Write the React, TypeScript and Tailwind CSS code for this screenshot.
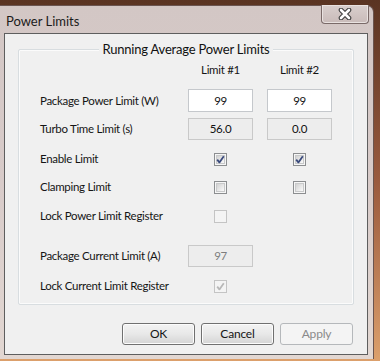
import React from "react";

const FONT = { fontFamily: '"Lato", "Noto Sans", sans-serif' };

function CheckMark({ color }: { color: string }) {
  return (
    <svg width="9" height="9" viewBox="0 0 9 9" className="absolute left-[1px] top-[1px]">
      <path d="M1.2 4.6 L3.4 7.4 L7.8 1.2" fill="none" stroke={color} strokeWidth="1.8" strokeLinejoin="round" />
    </svg>
  );
}

function CheckBox({ checked = false, disabled = false }: { checked?: boolean; disabled?: boolean }) {
  return (
    <div
      className={
        disabled
          ? "relative w-[13px] h-[13px] border border-[#c4c4c4] bg-[#f4f4f4] p-[1px]"
          : "relative w-[13px] h-[13px] border border-[#8c8e90] bg-[#f6f6f6] p-[1px]"
      }
    >
      <div
        className={
          disabled
            ? "w-full h-full bg-[#f4f4f4]"
            : "w-full h-full border border-[#c8c9ca] bg-gradient-to-br from-[#d2d2d2] to-[#fafafa]"
        }
      />
      {checked && <CheckMark color={disabled ? "#b8b8b8" : "#3a4a7c"} />}
    </div>
  );
}

function Field({ value, readOnly = false, disabled = false }: { value: string; readOnly?: boolean; disabled?: boolean }) {
  return (
    <div
      className={
        "w-[65px] h-full flex items-center justify-center border " +
        (readOnly || disabled ? "bg-[#ededed] border-[#c9c9c9] " : "bg-white border-[#c5c8cc] ") +
        (disabled ? "text-[#7d7d7d]" : "text-[#111]")
      }
    >
      {value}
    </div>
  );
}

function Row({ label, className, children }: { label: string; className: string; children?: React.ReactNode }) {
  return (
    <div className={"flex items-center " + className}>
      <div className="w-[148px] text-[#151515]">{label}</div>
      {children}
    </div>
  );
}

function Cell({ children }: { children?: React.ReactNode }) {
  return <div className="w-[65px] h-full flex items-center justify-center">{children}</div>;
}

function WinButton({ label, disabled = false }: { label: string; disabled?: boolean }) {
  return (
    <div
      className={
        disabled
          ? "w-[73px] h-[22px] rounded-[3px] border border-[#b5b8bb] bg-[#f4f4f4] flex items-center justify-center text-[#8a8a8a]"
          : "w-[73px] h-[22px] rounded-[3px] border border-[#707070] bg-gradient-to-b from-[#f3f3f3] via-[#e8e8e8] to-[#d4d4d4] flex items-center justify-center text-[#151515] shadow-[inset_0_0_0_1px_#fcfcfc]"
      }
    >
      {label}
    </div>
  );
}

export default function App() {
  return (
    <div className="w-[380px] h-[361px] overflow-hidden bg-gradient-to-b from-[#5a3422] via-[#9a5a3e] to-[#dca06c]" style={FONT}>
      <div className="mt-[5px] w-[374px] h-[354px] rounded-tr-[7px] border-r border-t border-[#6b5550] bg-gradient-to-b from-[#d3c7c5] via-[#d8cbc9] to-[#e2d7d2] flex flex-col pl-[4px] pr-[5px] pb-[4px]">
        {/* title bar */}
        <div className="h-[27px] flex justify-between items-start -mr-[1px]">
          <div className="pt-[7px] pl-[2px] text-[13px] leading-[16px] text-[#1b1b1b]">Power Limits</div>
          <div className="w-[48px] h-[19px] -mt-[1px] rounded-b-[4px] border border-t-0 border-[#7a6a68] bg-gradient-to-b from-[#d9cfcd] to-[#c9bbb9] shadow-[inset_0_0_0_1px_#e9e2e0] flex items-center justify-center">
            <svg width="14" height="12" viewBox="0 0 14 12">
              <path d="M3 2 L11 10 M11 2 L3 10" stroke="#3a3a3a" strokeWidth="4.6" strokeLinecap="round" />
              <path d="M3 2 L11 10 M11 2 L3 10" stroke="#ffffff" strokeWidth="2.6" strokeLinecap="round" />
            </svg>
          </div>
        </div>

        {/* client area */}
        <div className="flex-1 border border-[#5e5e5e] bg-[#f0f0f0] px-[13px] flex flex-col text-[11.5px] tracking-[-0.3px]">
          <div className="relative mt-[15px] border border-[#d8dde0] rounded-[2px] shadow-[inset_0_0_0_1px_#fbfbfb] pl-[21px] pb-[5px] flex flex-col">
            <div className="absolute -top-[10px] left-0 right-0 flex justify-center">
              <span className="bg-[#f0f0f0] px-[3px] text-[13px] tracking-[-0.2px] leading-[18px] text-[#111]">Running Average Power Limits</span>
            </div>

            <Row label="" className="mt-[10px] h-[20px]">
              <Cell><span className="text-[#151515]">Limit #1</span></Cell>
              <div className="w-[14px]" />
              <Cell><span className="text-[#151515]">Limit #2</span></Cell>
            </Row>
            <Row label="Package Power Limit (W)" className="mt-[9px] h-[23px]">
              <Field value="99" />
              <div className="w-[14px]" />
              <Field value="99" />
            </Row>
            <Row label="Turbo Time Limit (s)" className="mt-[6px] h-[22px]">
              <Field value="56.0" readOnly />
              <div className="w-[14px]" />
              <Field value="0.0" readOnly />
            </Row>
            <Row label="Enable Limit" className="mt-[6px] h-[26px]">
              <Cell><CheckBox checked /></Cell>
              <div className="w-[14px]" />
              <Cell><CheckBox checked /></Cell>
            </Row>
            <Row label="Clamping Limit" className="mt-[2px] h-[26px]">
              <Cell><CheckBox /></Cell>
              <div className="w-[14px]" />
              <Cell><CheckBox /></Cell>
            </Row>
            <Row label="Lock Power Limit Register" className="mt-[3px] h-[26px]">
              <Cell><CheckBox disabled /></Cell>
            </Row>
            <Row label="Package Current Limit (A)" className="mt-[16px] h-[22px]">
              <Field value="97" disabled />
            </Row>
            <Row label="Lock Current Limit Register" className="mt-[6px] h-[26px]">
              <Cell><CheckBox checked disabled /></Cell>
            </Row>
          </div>

          <div className="mt-[18px] flex justify-end gap-[6px] pr-[1px] text-[12px] tracking-[-0.2px]">
            <WinButton label="OK" />
            <WinButton label="Cancel" />
            <WinButton label="Apply" disabled />
          </div>
        </div>
      </div>
    </div>
  );
}
